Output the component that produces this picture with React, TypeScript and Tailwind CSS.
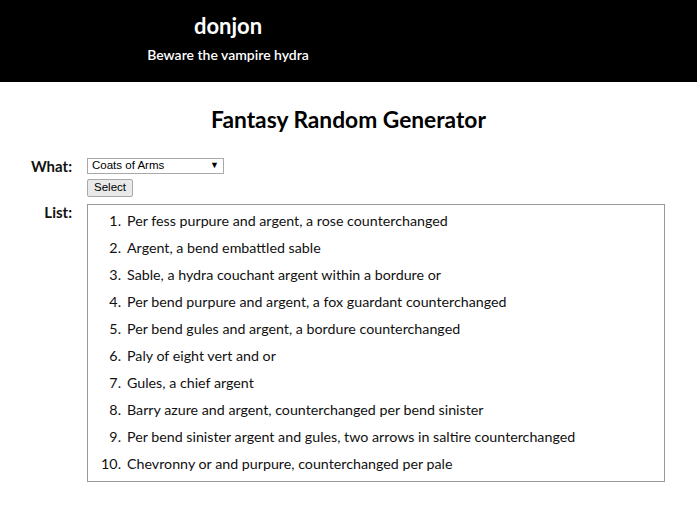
const items = [
  "Per fess purpure and argent, a rose counterchanged",
  "Argent, a bend embattled sable",
  "Sable, a hydra couchant argent within a bordure or",
  "Per bend purpure and argent, a fox guardant counterchanged",
  "Per bend gules and argent, a bordure counterchanged",
  "Paly of eight vert and or",
  "Gules, a chief argent",
  "Barry azure and argent, counterchanged per bend sinister",
  "Per bend sinister argent and gules, two arrows in saltire counterchanged",
  "Chevronny or and purpure, counterchanged per pale",
];

export default function App() {
  return (
    <div className="w-[697px] h-[514px] bg-white font-['Lato',sans-serif] text-[#111]">
      {/* Header */}
      <div className="h-[82px] bg-black text-white">
        <div className="w-[456px] flex flex-col items-center pt-[12px]">
          <div className="text-[22px] font-bold leading-[28px]">donjon</div>
          <div className="text-[14px] font-semibold leading-[18px] mt-[6px]">Beware the vampire hydra</div>
        </div>
      </div>

      <h1 className="text-center text-[22.75px] font-bold leading-[30px] mt-[23px] text-black">
        Fantasy Random Generator
      </h1>

      <div className="flex mt-[23px]">
        <div className="w-[72px] flex flex-col items-end text-[15px] font-bold">
          <div className="leading-[16px]">What:</div>
          <div className="mt-[30px] leading-[16px]">List:</div>
        </div>
        <div className="ml-[15px] flex flex-col">
          <div className="w-[137px] h-[16px] border border-[#a9a9a9] bg-white flex items-center justify-between px-[4px] font-['Liberation_Sans',sans-serif] text-[11.5px] text-black">
            <span>Coats of Arms</span>
            <span className="text-[9px]">▼</span>
          </div>
          <div className="mt-[5px] w-[46px] h-[18px] border border-[#a9a9a9] rounded-[2px] bg-[#e9e9e9] flex items-center justify-center font-['Liberation_Sans',sans-serif] text-[11.5px] text-black">
            Select
          </div>
          <div className="mt-[7px] w-[578px] h-[278px] border border-[#999] pt-[2px]">
            <ol className="flex flex-col">
              {items.map((t, i) => (
                <li key={i} className="flex h-[27px] items-center text-[14.25px]">
                  <span className="w-[33px] text-right">{i + 1}.</span>
                  <span className="ml-[6px]">{t}</span>
                </li>
              ))}
            </ol>
          </div>
        </div>
      </div>
    </div>
  );
}
